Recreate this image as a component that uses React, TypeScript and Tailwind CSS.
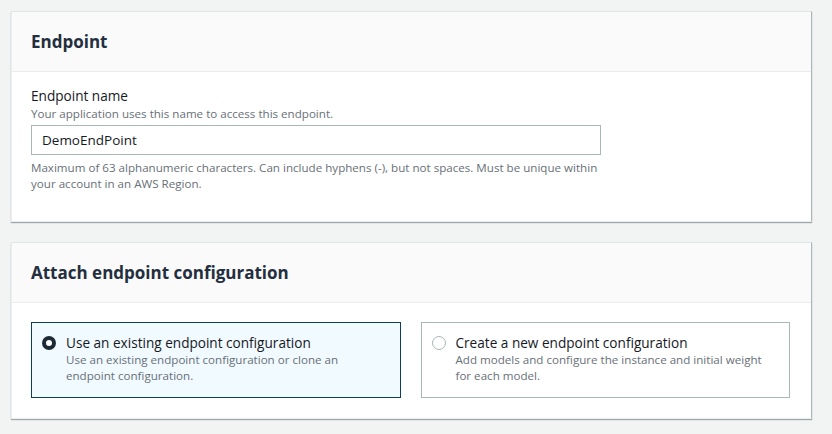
import { useState } from 'react';

const font = { fontFamily: '"Open Sans", "Noto Sans", sans-serif' };

function Card({ title, children }: { title: string; children: React.ReactNode }) {
  return (
    <section className="w-[801px] bg-white border border-[#eaeded] border-t-[#e1e4e4] border-r-[#aab7b8] shadow-[0_1px_1px_0_rgba(0,28,36,0.35)]">
      <div className="h-[60px] bg-[#fafafa] border-b border-[#eaeded] px-[19px] flex items-center">
        <h2 className="text-[17px] font-bold text-[#232f3e] leading-none">{title}</h2>
      </div>
      {children}
    </section>
  );
}

interface Option {
  id: string;
  title: string;
  description: string;
}

const options: Option[] = [
  {
    id: 'existing',
    title: 'Use an existing endpoint configuration',
    description: 'Use an existing endpoint configuration or clone an endpoint configuration.',
  },
  {
    id: 'new',
    title: 'Create a new endpoint configuration',
    description: 'Add models and configure the instance and initial weight for each model.',
  },
];

export default function App() {
  const [selected, setSelected] = useState('existing');
  const [name, setName] = useState('DemoEndPoint');

  return (
    <div className="w-[832px] h-[434px] bg-[#f2f3f3] pt-[11px] pl-[11px] flex flex-col gap-[20px]" style={font}>
      <Card title="Endpoint">
        <div className="px-[19px] pt-[15px] pb-[30px]">
          <label className="block text-[13.6px] leading-[18px] text-[#16191f]">Endpoint name</label>
          <p className="text-[11.6px] leading-[17px] text-[#687078]">
            Your application uses this name to access this endpoint.
          </p>
          <input
            value={name}
            onChange={(e) => setName(e.target.value)}
            className="mt-[3px] w-[570px] h-[30px] border border-[#aab7b8] px-[10px] text-[13.5px] text-[#16191f] outline-none"
            style={font}
          />
          <p className="mt-[5px] w-[580px] text-[11.6px] leading-[15.5px] text-[#687078]">
            Maximum of 63 alphanumeric characters. Can include hyphens (-), but not spaces. Must be unique within your account in an AWS Region.
          </p>
        </div>
      </Card>

      <Card title="Attach endpoint configuration">
        <div className="pl-[19px] pr-[21px] pt-[19px] pb-[20px] flex gap-[20px]">
          {options.map((opt) => {
            const active = selected === opt.id;
            return (
              <button
                key={opt.id}
                onClick={() => setSelected(opt.id)}
                className={`w-[370px] h-[76px] border text-left flex items-start gap-[10px] pl-[10px] pr-[14px] pt-[10px] ${
                  active ? 'border-[#0e3d5a] bg-[#f1faff]' : 'border-[#aab7b8] bg-white'
                }`}
              >
                <span
                  className={`mt-[3px] shrink-0 w-[14px] h-[14px] rounded-full bg-white ${
                    active ? 'border-[4px] border-[#1d2a36]' : 'border border-[#aab7b8]'
                  }`}
                />
                <span className="flex flex-col">
                  <span className="text-[13.6px] leading-[19px] text-[#16191f]">{opt.title}</span>
                  <span className="text-[11.6px] leading-[16px] text-[#687078]">{opt.description}</span>
                </span>
              </button>
            );
          })}
        </div>
      </Card>
    </div>
  );
}
